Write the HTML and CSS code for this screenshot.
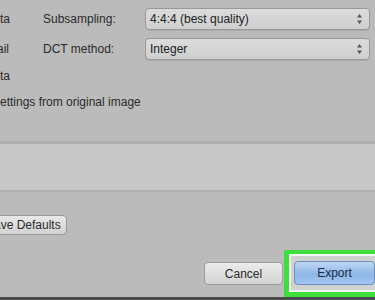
FILE: index.html
```html
<!DOCTYPE html>
<html lang="en">
<head>
    <meta charset="UTF-8">
    <meta name="viewport" content="width=device-width, initial-scale=1.0">
    <title>Export Options</title>
    <link rel="stylesheet" href="styles.css">
</head>
<body>
    <div class="dialog">
        <div class="options">
            <div class="row">
                <span class="check">ta</span>
                <span class="label">Subsampling:</span>
                <div class="select">
                    <span>4:4:4 (best quality)</span>
                    <svg class="arrows" width="7" height="12" viewBox="0 0 7 12"><path d="M3.5 1 L6 4.5 L1 4.5 Z M3.5 11 L6 7.5 L1 7.5 Z" fill="#555"/></svg>
                </div>
            </div>
            <div class="row">
                <span class="check">ail</span>
                <span class="label">DCT method:</span>
                <div class="select">
                    <span>Integer</span>
                    <svg class="arrows" width="7" height="12" viewBox="0 0 7 12"><path d="M3.5 1 L6 4.5 L1 4.5 Z M3.5 11 L6 7.5 L1 7.5 Z" fill="#555"/></svg>
                </div>
            </div>
            <div class="line">ta</div>
            <div class="line">ettings from original image</div>
        </div>

        <div class="band"></div>

        <div class="defaults">
            <button class="btn save">Save Defaults</button>
        </div>

        <div class="actions">
            <button class="btn cancel">Cancel</button>
            <div class="highlight">
                <button class="btn export">Export</button>
            </div>
        </div>

        <div class="strip"></div>
    </div>
</body>
</html>
```

FILE: styles.css
```css
html, body {
    margin: 0;
    height: 300px;
    overflow: hidden;
}
body {
    background-color: #bbbbbb;
    font-family: 'Liberation Sans', Arial, sans-serif;
    font-size: 12px;
    color: #2b2b2b;
}
.dialog {
    display: flex;
    flex-direction: column;
    height: 300px;
}
.options {
    padding: 8px 5px 0 0;
}
.row {
    display: grid;
    grid-template-columns: 43px 102px 1fr;
    align-items: center;
    height: 22px;
    margin-bottom: 8px;
}
.check {
    white-space: nowrap;
}
.row:nth-child(2) .check {
    margin-left: -3px;
}
.select {
    display: flex;
    align-items: center;
    justify-content: space-between;
    height: 20px;
    padding: 0 6px 0 4px;
    border: 1px solid #999;
    border-radius: 4px;
    background: linear-gradient(#dcdcdc, #cfcfcf);
    box-shadow: 0 1px 0 rgba(0, 0, 0, 0.08);
    color: #222;
}
.line {
    height: 16px;
    line-height: 16px;
    margin-top: 1px;
    margin-bottom: 10px;
    white-space: nowrap;
}
.band {
    margin-top: 21px;
    height: 46px;
    background-color: #c7c7c7;
    border-top: 3px solid #aeaeae;
    border-bottom: 2px solid #afafaf;
}
.btn {
    font-family: 'Liberation Sans', Arial, sans-serif;
    font-size: 12px;
    border-radius: 4px;
    padding: 0;
    cursor: pointer;
}
.defaults {
    margin-top: 23px;
    display: flex;
}
.save {
    height: 20px;
    margin-left: -23px;
    padding: 0 5px 0 8px;
    border: 1px solid #9a9a9a;
    background: linear-gradient(#e8e8e8, #d2d2d2);
    color: #2b2b2b;
}
.actions {
    margin-top: 15px;
    display: flex;
    align-items: center;
    justify-content: flex-end;
    margin-right: -40px;
}
.cancel {
    width: 79px;
    height: 23px;
    border: 1px solid #9c9c9c;
    background: linear-gradient(#ebebeb, #d3d3d3);
    color: #2b2b2b;
    margin-right: 1px;
}
.highlight {
    border: 5px solid #3de03a;
    border-top-width: 4px;
    padding: 7px 35px 7px 5px;
    background-color: #cfd2cf;
    box-shadow: inset 0 0 0 2px rgba(255, 255, 255, 0.75);
}
.export {
    display: block;
    width: 81px;
    height: 24px;
    border: 1px solid #6d8fbe;
    background: linear-gradient(#c0d8f3, #8db6e7 55%, #a1c5ee);
    color: #1c2b46;
}
.strip {
    margin-top: auto;
    height: 3px;
    background-color: #4b4b4b;
}
```
